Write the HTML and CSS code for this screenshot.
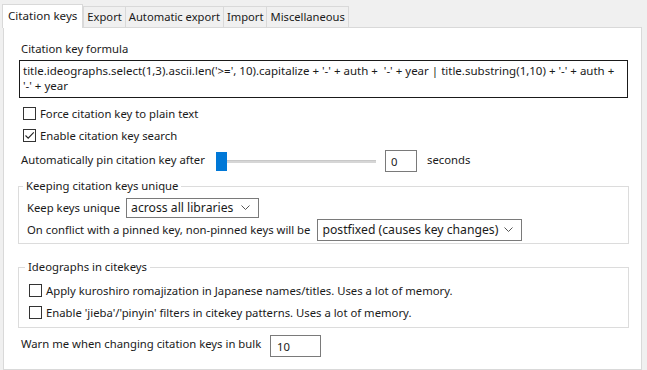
FILE: index.html
```html
<!DOCTYPE html>
<html>
<head>
<meta charset="utf-8">
<link rel="stylesheet" href="styles.css">
</head>
<body>
<div class="tabs">
  <div class="tab active">Citation keys</div>
  <div class="tab">Export</div>
  <div class="tab">Automatic export</div>
  <div class="tab">Import</div>
  <div class="tab">Miscellaneous</div>
</div>
<div class="panel">
  <div class="label formula-label">Citation key formula</div>
  <div class="formula">title.ideographs.select(1,3).ascii.len('&gt;=', 10).capitalize + '-' + auth +  '-' + year | title.substring(1,10) + '-' + auth +
'-' + year</div>
  <label class="check first"><span class="box"></span><span>Force citation key to plain text</span></label>
  <label class="check second"><span class="box"><svg width="13" height="13" viewBox="0 0 13 13"><path d="M2.5 6.5 L5.2 9.2 L10.8 3.4" fill="none" stroke="#222" stroke-width="1.1"/></svg></span><span>Enable citation key search</span></label>
  <div class="slider-row">
    <span class="slider-label">Automatically pin citation key after</span>
    <div class="slider"><div class="thumb"></div><div class="track"></div></div>
    <div class="input small">0</div>
    <span class="unit">seconds</span>
  </div>
  <fieldset class="group unique">
    <legend>Keeping citation keys unique</legend>
    <div class="row r1"><span>Keep keys unique</span><div class="select s1"><span>across all libraries</span><svg class="chev" width="9" height="5" viewBox="0 0 9 5"><path d="M0.5 0.5 L4.5 4.5 L8.5 0.5" fill="none" stroke="#555" stroke-width="1"/></svg></div></div>
    <div class="row r2"><span>On conflict with a pinned key, non-pinned keys will be</span><div class="select s2"><span>postfixed (causes key changes)</span><svg class="chev" width="9" height="5" viewBox="0 0 9 5"><path d="M0.5 0.5 L4.5 4.5 L8.5 0.5" fill="none" stroke="#555" stroke-width="1"/></svg></div></div>
  </fieldset>
  <fieldset class="group ideo">
    <legend>Ideographs in citekeys</legend>
    <label class="check c3"><span class="box"></span><span>Apply kuroshiro romajization in Japanese names/titles. Uses a lot of memory.</span></label>
    <label class="check c4"><span class="box"></span><span>Enable 'jieba'/'pinyin' filters in citekey patterns. Uses a lot of memory.</span></label>
  </fieldset>
  <div class="warn-row">
    <span class="warn-label">Warn me when changing citation keys in bulk</span>
    <div class="input bulk">10</div>
  </div>
</div>
</body>
</html>
```
FILE: styles.css
```css
html, body {
  margin: 0;
  padding: 0;
  background: #f0f0f0;
  font-family: "Noto Sans", "Open Sans", sans-serif;
  font-size: 11.3px;
  color: #1a1a1a;
  overflow: hidden;
  white-space: nowrap;
}
.tabs {
  display: flex;
  align-items: flex-end;
  height: 27px;
  padding-left: 2px;
  position: relative;
  z-index: 1;
}
.tab {
  height: 20px;
  line-height: 19px;
  padding: 0 3px;
  background: #f0f0f0;
  border: 1px solid #d9d9d9;
  border-bottom: none;
  margin-left: -1px;
  box-sizing: content-box;
  font-size: 11.2px;
}
.tab.active {
  height: 23px;
  line-height: 21px;
  background: #fff;
  padding: 0 5px;
  margin-left: 0;
  margin-bottom: -1px;
  border-color: #d9d9d9;
  font-size: 11.6px;
}
.tabs .tab:nth-child(2) { margin-left: 0; }
.panel {
  margin: 0 5px 0 3px;
  background: #fff;
  border: 1px solid #d9d9d9;
  height: 341px;
  display: flex;
  flex-direction: column;
  align-items: flex-start;
}
.label, .slider-label, .warn-label {
  line-height: 18px;
}
.formula-label {
  margin: 12px 0 0 17px;
}
.formula {
  margin: 2px 0 0 15px;
  width: 609px;
  height: 38px;
  box-sizing: border-box;
  border: 1px solid #1a1a1a;
  padding: 2px 3px;
  line-height: 15px;
  font-size: 11.5px;
  white-space: pre;
  overflow: hidden;
}
.check {
  display: flex;
  align-items: center;
  height: 20px;
  gap: 4px;
}
.check.first { margin: 5px 0 0 19px; }
.check.second { margin: 2px 0 0 19px; }
.box {
  width: 13px;
  height: 13px;
  box-sizing: border-box;
  border: 1px solid #333;
  background: #fff;
  position: relative;
  flex: none;
}
.box svg {
  position: absolute;
  left: -1px;
  top: -1px;
}
.slider-row {
  display: flex;
  align-items: center;
  height: 22px;
  margin: 5px 0 0 17px;
}
.slider-label {
  width: 195px;
  margin-top: -3px;
}
.slider {
  width: 160px;
  height: 19px;
  display: flex;
  align-items: center;
}
.thumb {
  width: 11px;
  height: 19px;
  background: #0078d7;
  flex: none;
}
.track {
  flex: 1;
  height: 3px;
  background: #d6d6d6;
  border-top: 1px solid #c8c8c8;
  box-sizing: border-box;
}
.input {
  box-sizing: border-box;
  border: 1px solid #7a7a7a;
  background: #fff;
  height: 22px;
  line-height: 20px;
  padding: 1px 5px 0;
}
.input.small {
  width: 32px;
  margin-left: 9px;
}
.unit {
  margin-left: 10px;
  margin-top: -3px;
}
.group {
  margin: 6px 0 0 14px;
  width: 611px;
  box-sizing: border-box;
  border: 1px solid #dcdcdc;
  padding: 3px 0 2px 8px;
}
.group legend {
  padding: 0 3px;
  margin-left: -4px;
  line-height: 16px;
}
.row {
  display: flex;
  align-items: center;
}
.row.r1 { height: 21px; }
.row.r2 { height: 23px; }
.select {
  display: flex;
  align-items: center;
  justify-content: space-between;
  box-sizing: border-box;
  border: 1px solid #7a7a7a;
  background: #fff;
  font-size: 12.2px;
  padding: 0 8px 0 4px;
}
.s1 {
  width: 133px;
  height: 20px;
  margin-left: 6px;
}
.s2 {
  width: 205px;
  height: 22px;
  margin-left: 7px;
}
.chev { flex: none; }
.group.ideo {
  margin-top: 15px;
  padding: 5px 0 5px 10px;
}
.check.c4 { margin-top: 2px; }
.warn-row {
  display: flex;
  align-items: center;
  margin: 7px 0 0 17px;
  height: 22px;
}
.warn-label {
  width: 249px;
  margin-top: -4px;
}
.input.bulk {
  width: 51px;
  padding-left: 6px;
}
```
